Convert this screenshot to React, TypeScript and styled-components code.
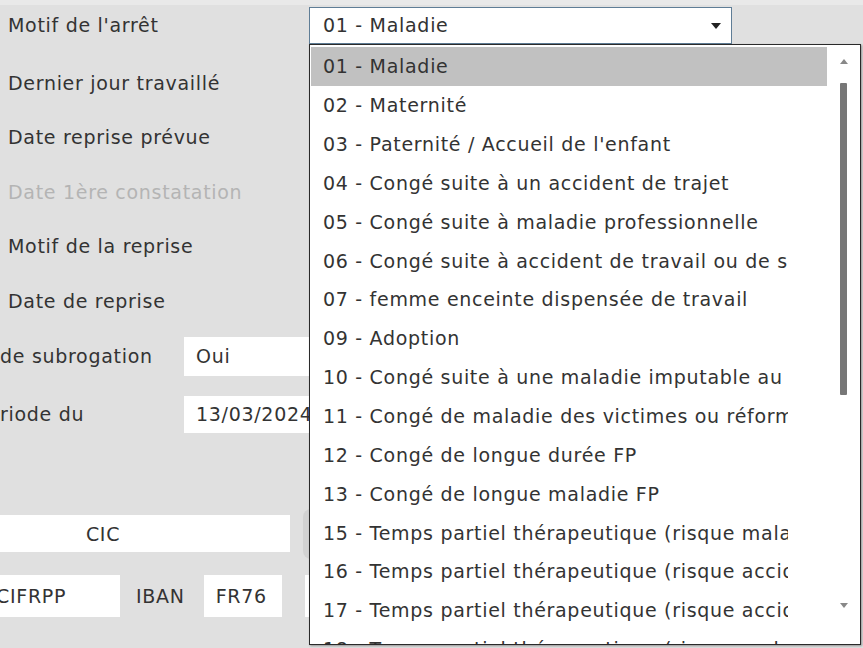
import React from "react";
import styled, { createGlobalStyle } from "styled-components";

const GlobalStyle = createGlobalStyle`
	html, body {
		margin: 0;
		padding: 0;
		background: #e0e0e0;
		overflow: hidden;
	}
	body {
		font-family: "DejaVu Sans", Verdana, sans-serif;
		font-size: 19px;
		letter-spacing: 0.7px;
		color: #333;
	}
`;

const Page = styled.div`
	position: relative;
	width: 863px;
	height: 648px;
	overflow: hidden;
	background: #e0e0e0;
	border-top: 5px solid #e9e9e9;
	box-sizing: border-box;
`;

// first row is taller, it holds the select
const Form = styled.div`
	display: grid;
	grid-template-columns: 301px 1fr;
	grid-template-rows: 61px repeat(5, 54.5px);
	align-items: center;
	margin-top: -10.5px;
	padding-left: 8px;
`;

const Label = styled.span<{ $disabled?: boolean }>`
	white-space: nowrap;
	color: ${(p) => (p.$disabled ? "#b4b4b4" : "#333")};
`;

const Select = styled.div`
	width: 423px;
	height: 37px;
	box-sizing: border-box;
	background: #fff;
	border: 1px solid #5f7d96;
	display: flex;
	align-items: center;
	justify-content: space-between;
	padding: 0 10px 0 13px;
`;

const Caret = styled.span`
	width: 0;
	height: 0;
	border-left: 5px solid transparent;
	border-right: 5px solid transparent;
	border-top: 6px solid #222;
	margin-top: 2px;
`;

const SubForm = styled.div`
	display: grid;
	grid-template-columns: 184px 1fr;
	grid-auto-rows: 58px;
	align-items: center;
	margin-top: -1px;
`;

const Input = styled.div<{ $w: number; $h: number }>`
	width: ${(p) => p.$w}px;
	height: ${(p) => p.$h}px;
	background: #fff;
	display: flex;
	align-items: center;
	padding-left: 12px;
	box-sizing: border-box;
	white-space: nowrap;
	overflow: hidden;
`;

const Bank = styled.div`
	display: flex;
	flex-direction: column;
	gap: 16.5px;
	margin-top: 65.5px;
`;

const BankRow = styled.div`
	display: flex;
	align-items: center;
`;

const Box = styled.div<{ $w: number; $h: number; $center?: boolean }>`
	width: ${(p) => p.$w}px;
	height: ${(p) => p.$h}px;
	background: #fff;
	display: flex;
	align-items: center;
	justify-content: ${(p) => (p.$center ? "center" : "flex-start")};
	padding-left: ${(p) => (p.$center ? 0 : 12)}px;
	box-sizing: border-box;
	white-space: nowrap;
	flex-shrink: 0;
`;

const LeftCut = styled(Box)`
	padding-left: 0;
	text-indent: -4px;
	overflow: hidden;
`;

const Spacer = styled(Box)`
	margin-left: 23px;
`;

const GreyButton = styled.div`
	width: 80px;
	height: 50px;
	margin-left: 13px;
	border-radius: 8px;
	background: #d2d2d2;
`;

const InlineLabel = styled.span`
	margin: 0 19px 0 16px;
	white-space: nowrap;
`;

const BankName = styled.span`
	margin-right: 84px;
`;

const Dropdown = styled.div`
	position: absolute;
	left: 309px;
	top: 39px;
	width: 552px;
	height: 601px;
	box-sizing: border-box;
	background: #fff;
	border: 1px solid #2a2a2a;
	box-shadow: 1px 1px 2px rgba(0, 0, 0, 0.35);
	display: flex;
	overflow: hidden;
`;

const List = styled.div`
	flex: 1;
	padding: 2px 0 0 1px;
`;

const Item = styled.div<{ $active?: boolean }>`
	height: 38.85px;
	display: flex;
	align-items: center;
	padding-left: 12px;
	background: ${(p) => (p.$active ? "#c1c1c1" : "transparent")};
`;

const ItemText = styled.span`
	display: block;
	max-width: 465px;
	overflow: hidden;
	white-space: nowrap;
`;

const ScrollTrack = styled.div`
	width: 33px;
	display: flex;
	flex-direction: column;
	align-items: center;
	padding-top: 14px;
`;

const ArrowUp = styled.span`
	width: 0;
	height: 0;
	border-left: 4px solid transparent;
	border-right: 4px solid transparent;
	border-bottom: 5px solid #888;
`;

const ArrowDown = styled.span`
	width: 0;
	height: 0;
	border-left: 4px solid transparent;
	border-right: 4px solid transparent;
	border-top: 5px solid #888;
	margin-top: 208px;
`;

const Thumb = styled.div`
	width: 7px;
	height: 312px;
	margin-top: 19px;
	background: #777;
	border-radius: 1px;
`;

const options = [
	"01 - Maladie",
	"02 - Maternité",
	"03 - Paternité / Accueil de l'enfant",
	"04 - Congé suite à un accident de trajet",
	"05 - Congé suite à maladie professionnelle",
	"06 - Congé suite à accident de travail ou de service",
	"07 - femme enceinte dispensée de travail",
	"09 - Adoption",
	"10 - Congé suite à une maladie imputable au service",
	"11 - Congé de maladie des victimes ou réformés de guerre",
	"12 - Congé de longue durée FP",
	"13 - Congé de longue maladie FP",
	"15 - Temps partiel thérapeutique (risque maladie)",
	"16 - Temps partiel thérapeutique (risque accident de trajet)",
	"17 - Temps partiel thérapeutique (risque accident de travail)",
	"18 - Temps partiel thérapeutique (risque maladie professionnelle)",
];

export default function App() {
	return (
		<>
			<GlobalStyle />
			<Page>
				<Form>
					<Label>Motif de l'arrêt</Label>
					<Select>
						<span>01 - Maladie</span>
						<Caret />
					</Select>
					<Label>Dernier jour travaillé</Label>
					<span />
					<Label>Date reprise prévue</Label>
					<span />
					<Label $disabled>Date 1ère constatation</Label>
					<span />
					<Label>Motif de la reprise</Label>
					<span />
					<Label>Date de reprise</Label>
					<span />
				</Form>
				<SubForm>
					<Label>de subrogation</Label>
					<Input $w={200} $h={39}>Oui</Input>
					<Label>riode du</Label>
					<Input $w={200} $h={37}>13/03/2024</Input>
				</SubForm>
				<Bank>
					<BankRow>
						<Box $w={290} $h={37} $center>
							<BankName>CIC</BankName>
						</Box>
						<GreyButton />
					</BankRow>
					<BankRow>
						<LeftCut $w={120} $h={42}>CIFRPP</LeftCut>
						<InlineLabel>IBAN</InlineLabel>
						<Box $w={78} $h={42}>FR76</Box>
						<Spacer $w={80} $h={42} />
					</BankRow>
				</Bank>

				<Dropdown>
					<List>
						{options.map((o, i) => (
							<Item key={o} $active={i === 0}>
								<ItemText>{o}</ItemText>
							</Item>
						))}
					</List>
					<ScrollTrack>
						<ArrowUp />
						<Thumb />
						<ArrowDown />
					</ScrollTrack>
				</Dropdown>
			</Page>
		</>
	);
}
